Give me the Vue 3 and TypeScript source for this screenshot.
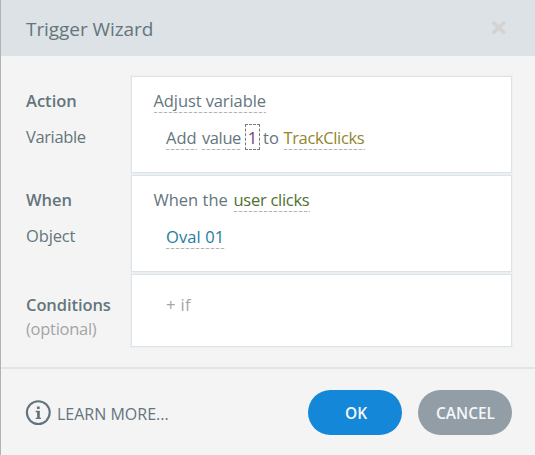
<script setup lang="ts">
import { ref } from 'vue'

const variableName = ref('TrackClicks')
const amount = ref(1)
const objectName = ref('Oval 01')
</script>

<template>
  <div class="dialog">
    <header class="header">
      <h1 class="title">Trigger Wizard</h1>
      <button class="close" aria-label="Close">
        <svg width="16" height="16" viewBox="0 0 16 16"><path d="M1.6 2 13.9 13.4M13.9 2 1.6 13.4" stroke="#d3d3d3" stroke-width="3.6" /></svg>
      </button>
    </header>

    <main class="body">
      <section class="row">
        <div class="labels">
          <div class="line"><b class="t-action">Action</b></div>
          <div class="line second"><span class="t-variable">Variable</span></div>
        </div>
        <div class="panel">
          <div class="line"><a class="link t-adjust">Adjust variable</a></div>
          <div class="line second indent">
            <a class="link t-add">Add</a><a class="link t-value">value</a><span class="amount">{{ amount }}</span><span class="t-to">to</span><a class="link t-track">{{ variableName }}</a>
          </div>
        </div>
      </section>

      <section class="row">
        <div class="labels">
          <div class="line"><b class="t-when">When</b></div>
          <div class="line second"><span class="t-object">Object</span></div>
        </div>
        <div class="panel">
          <div class="line"><span class="t-whenthe">When the</span><a class="link t-user">user clicks</a></div>
          <div class="line second indent"><a class="link t-oval">{{ objectName }}</a></div>
        </div>
      </section>

      <section class="row short">
        <div class="labels">
          <div class="line"><b class="t-cond">Conditions</b></div>
          <div class="line muted"><span class="t-opt">(optional)</span></div>
        </div>
        <div class="panel">
          <div class="line indent muted"><span class="t-if">+ if</span></div>
        </div>
      </section>
    </main>

    <footer class="footer">
      <a class="learn">
        <svg width="26" height="26" viewBox="0 0 26 26">
          <circle cx="13.3" cy="12.6" r="11.4" fill="none" stroke="#61747d" stroke-width="2.1" />
          <path d="M11.9 6.4h2.8v2.7h-2.8zM10.7 10.8h4.1v7h1.2v1.3h-5.3v-1.3h1.4v-5.6h-1.4z" fill="#61747d" />
        </svg>
        <span class="t-learn">LEARN MORE...</span>
      </a>
      <button class="btn ok"><span class="t-ok">OK</span></button>
      <button class="btn cancel"><span class="t-cancel">CANCEL</span></button>
    </footer>
  </div>
</template>

<style>
body {
  margin: 0;
  background: #f4f4f4;
}
</style>

<style scoped>
.dialog {
  box-sizing: border-box;
  width: 535px;
  height: 455px;
  border-left: 1px solid #b1b2b3;
  background: #f4f4f4;
  color: #64757d;
  font-family: "Open Sans", "Noto Sans", sans-serif;
  font-size: 16.5px;
  display: flex;
  flex-direction: column;
  overflow: hidden;
}
.header {
  flex: none;
  box-sizing: border-box;
  height: 56px;
  padding: 0 28px 0 25px;
  background: #dde2e6;
  display: flex;
  align-items: center;
  justify-content: space-between;
}
.title {
  margin: 0;
  padding-top: 1px;
  font-size: 19px;
  font-weight: 400;
  line-height: 28px;
  letter-spacing: -0.07px;
  white-space: nowrap;
}
button {
  border: 0;
  padding: 0;
  background: none;
  font-family: inherit;
}
.close {
  width: 16px;
  height: 16px;
}
.close svg {
  display: block;
}
.body {
  flex: none;
  box-sizing: border-box;
  height: 311px;
  padding: 20px 23px 0 25px;
  display: flex;
  flex-direction: column;
  gap: 2px;
}
.row {
  display: grid;
  grid-template-columns: 105px 381px;
  height: 97px;
}
.short {
  height: 73px;
}
.labels {
  padding-top: 13px;
}
.panel {
  box-sizing: border-box;
  border: 1px solid #dde4e8;
  background: #fff;
  padding: 12px 0 0 21.5px;
  box-shadow: 0 0 0 1px #edf0f2;
}
.short .labels,
.short .panel {
  padding-top: 19px;
}
.short .panel {
  padding-top: 18px;
}
.line {
  display: flex;
  height: 24px;
  line-height: 24px;
  white-space: nowrap;
}
.second {
  margin-top: 12px;
  line-height: 25px;
}
.labels .second {
  line-height: 24px;
}
.indent {
  padding-left: 12.5px;
}
.link {
  height: 25px;
  background: repeating-linear-gradient(90deg, #b4b4b4 0 3px, #ececec 3px 5px) 0 23px / 100% 1px no-repeat;
}
.second .link {
  background-position: 0 24px;
}
b {
  font-weight: 600;
}
.muted {
  color: #a3a5a6;
}
.t-variable { letter-spacing: -0.38px; }
.t-object { letter-spacing: -0.15px; }
.t-opt { letter-spacing: -0.28px; }
.t-if { letter-spacing: 0.4px; }
.t-cond { letter-spacing: -0.08px; }
.t-add { width: 31px; margin-right: 5px; }
.t-value { width: 39px; margin-right: 4px; letter-spacing: -0.4px; }
.amount {
  box-sizing: border-box;
  width: 15px;
  height: 26px;
  margin-top: -1px;
  margin-right: 3px;
  border: 1px dashed #7b7b7b;
  color: #71397a;
  text-align: center;
  line-height: 25px;
}
.t-to { width: 20.5px; }
.t-track { width: 81px; color: #91862f; letter-spacing: -0.36px; }
.t-adjust { width: 112px; letter-spacing: -0.1px; }
.t-whenthe { width: 80px; }
.t-user { width: 76px; color: #4f702f; letter-spacing: -0.28px; }
.t-oval { width: 59px; color: #247c9d; letter-spacing: 0.1px; }
.footer {
  flex: 1;
  border-top: 2px solid #e0e5e9;
  padding: 21px 23px 0 24px;
  display: flex;
  align-items: flex-start;
}
.learn {
  flex: 1;
  display: flex;
  align-items: center;
  height: 45px;
  font-size: 16px;
}
.t-learn {
  margin-left: 6px;
  padding-top: 3px;
  white-space: nowrap;
}
.btn {
  width: 94px;
  height: 45px;
  border-radius: 23px;
  color: #f4f7f9;
  font-size: 15.5px;
  font-weight: 600;
}
.ok {
  background: #1487d9;
  margin-right: 16px;
}
.cancel {
  background: #939da5;
}
.t-cancel {
  margin-left: 1px;
}
.t-ok {
  margin-left: 2px;
}
</style>
